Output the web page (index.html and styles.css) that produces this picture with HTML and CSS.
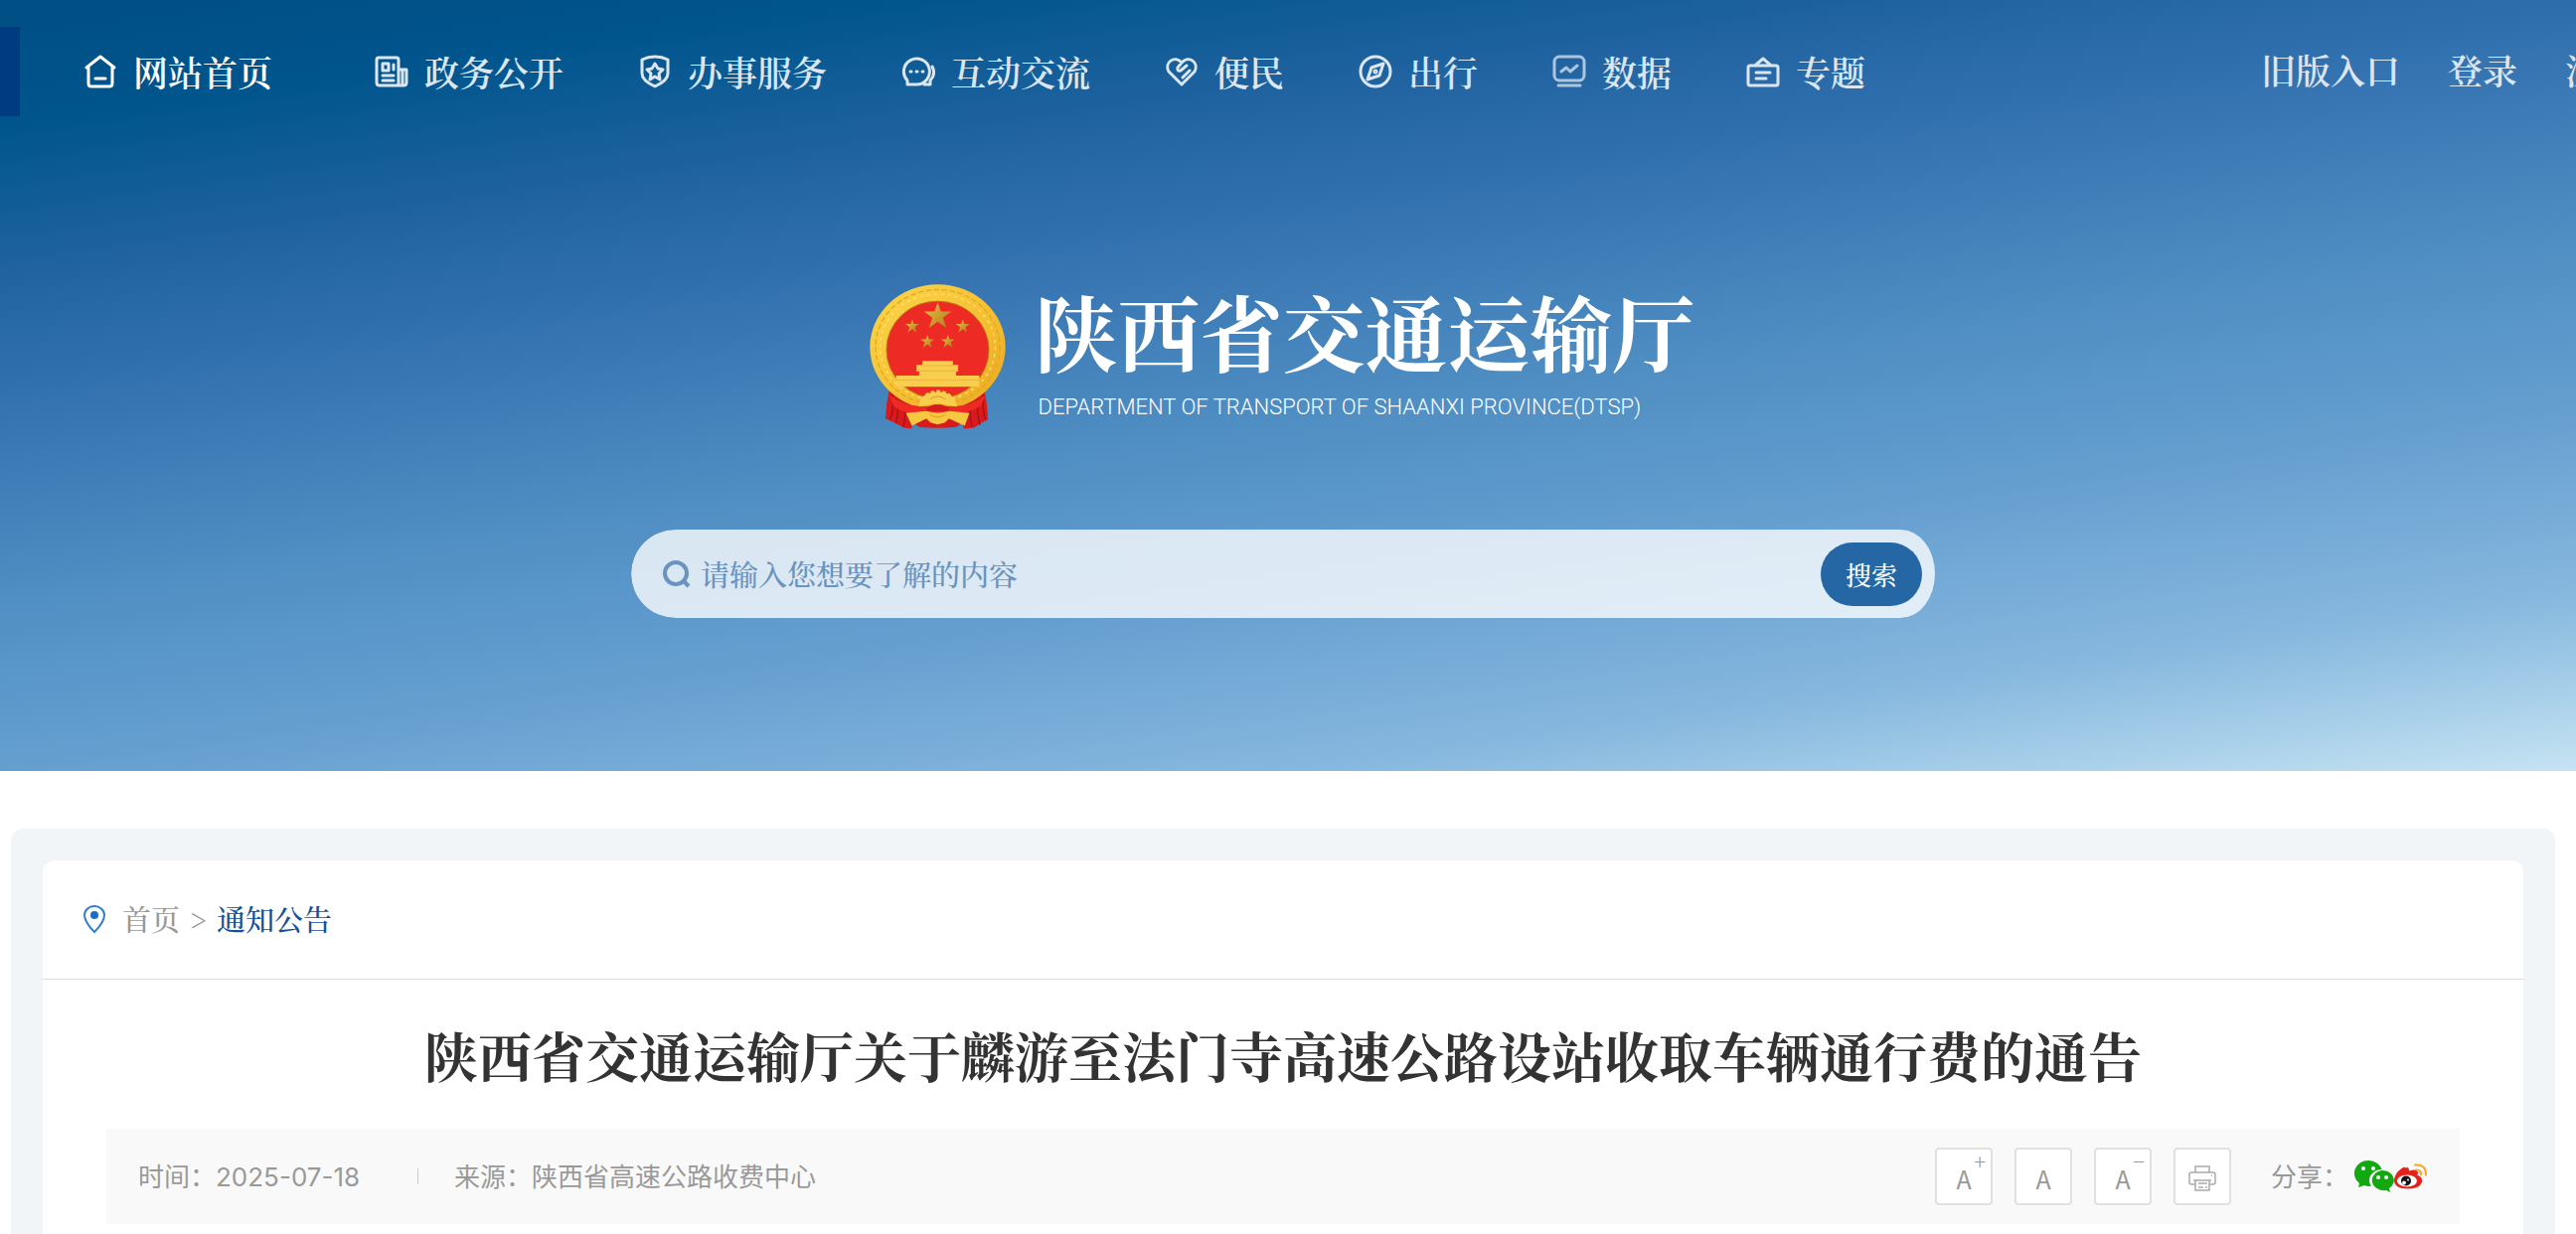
FILE: index.html
```
<!DOCTYPE html>
<html lang="zh-CN">
<head>
    <meta charset="UTF-8">
    <meta name="viewport" content="width=device-width, initial-scale=1.0">
    <title>陕西省交通运输厅</title>
    <link rel="stylesheet" href="styles.css">
</head>
<body>

<header class="header">
    <div class="topbar">
        <nav class="nav">
            <a href="#" class="nav-item active">
                <svg class="icon" viewBox="0 0 34 34"><path d="M3 13 17 2l14 11M5 13v16q0 3 3 3h18q3 0 3-3V13M12 24h10"/></svg>
                网站首页
            </a>
            <a href="#" class="nav-item">
                <svg class="icon" viewBox="0 0 34 34"><path d="M24 31V5q0-2-2-2H4q-2 0-2 2v23q0 3 3 3h24q3 0 3-3V15h-8M8 9h6v7H8zM19 10v5M8 21h11M8 26h11M28 16v14"/></svg>
                政务公开
            </a>
            <a href="#" class="nav-item">
                <svg class="icon" viewBox="0 0 34 34"><path d="M17 2q7 0 13 3v14q0 7-13 13Q4 26 4 19V5q6-3 13-3zM17 9l3 5 5 1-4 4 1 6-5-3-5 3 1-6-4-4 5-1z"/></svg>
                办事服务
            </a>
            <a href="#" class="nav-item">
                <svg class="icon" viewBox="0 0 34 34"><path d="M6 30v-4A13 13 0 1 1 15 30zM31 12q4 8-2 14v4h-6M9 17h1M15 17h1M21 17h1"/></svg>
                互动交流
            </a>
            <a href="#" class="nav-item">
                <svg class="icon" viewBox="0 0 34 34"><path d="M17 30 4 17C-1 8 10 0 17 8c7-8 18 0 13 9zM17 8l-4 5q-1 4 3 3l6-5M18 23l7-7"/></svg>
                便民
            </a>
            <a href="#" class="nav-item">
                <svg class="icon" viewBox="0 0 34 34"><circle cx="17" cy="17" r="15"/><path d="M25 9l-4 12-12 4 4-12z"/><circle cx="17" cy="17" r="1"/></svg>
                出行
            </a>
            <a href="#" class="nav-item data">
                <svg class="icon" viewBox="0 0 34 34"><rect x="2" y="2" width="30" height="24" rx="5"/><path d="M9 17l5-4 4 4 7-6M6 31h22"/></svg>
                数据
            </a>
            <a href="#" class="nav-item">
                <svg class="icon" viewBox="0 0 34 34"><rect x="2" y="11" width="30" height="20" rx="2"/><path d="M10 10l7-6 7 6M10 18h14M10 24h10"/></svg>
                专题
            </a>
        </nav>
        <div class="user-links">
            <a href="#">旧版入口</a>
            <a href="#">登录</a>
            <a href="#">注册</a>
        </div>
    </div>

    <div class="brand">
        <svg class="emblem" viewBox="24 18 412 438">
            <defs>
                <linearGradient id="gold" x1="0" y1="0" x2="1" y2="1">
                    <stop offset="0" stop-color="#fbd64a"/>
                    <stop offset="0.5" stop-color="#f6c234"/>
                    <stop offset="1" stop-color="#e9a820"/>
                </linearGradient>
                <linearGradient id="star" x1="0" y1="0" x2="1" y2="1">
                    <stop offset="0" stop-color="#f0c044"/>
                    <stop offset="1" stop-color="#b07a1c"/>
                </linearGradient>
                <path id="s" d="M0-40 10-12 42-12 16 7 26 38 0 19-26 38-16 7-42-12-10-12z"/>
            </defs>
            <!-- drapes -->
            <path d="M86 326q-12 50-14 98l26 12 30 16 22 3 14-35h132l14 35 32-4 20-14 20-10q-2-56-14-101z" fill="#d91a1c"/>
            <path d="M92 350q8 44-6 78M108 366q4 36-4 72M368 350q-4 44 6 78M352 366q-4 44 6 78M130 390q4 26-4 60M330 390q-4 26 4 60" stroke="#a80f14" stroke-width="4" fill="none"/>
            <!-- wreath -->
            <ellipse cx="230" cy="208" rx="205" ry="190" fill="url(#gold)"/>
            <ellipse cx="230" cy="208" rx="188" ry="174" fill="none" stroke="#e3a722" stroke-width="4" stroke-dasharray="16 8"/>
            <ellipse cx="230" cy="208" rx="174" ry="161" fill="none" stroke="#ffe27a" stroke-width="4" stroke-dasharray="9 12"/>
            <ellipse cx="230" cy="216" rx="155" ry="147" fill="#ee2a24" stroke="#b9771b" stroke-width="3"/>
            <g fill="url(#star)">
                <use href="#s" transform="translate(230 112)"/>
                <use href="#s" transform="translate(153 144) scale(.5)"/>
                <use href="#s" transform="translate(306 144) scale(.5)"/>
                <use href="#s" transform="translate(199 190) scale(.5)"/>
                <use href="#s" transform="translate(261 190) scale(.5)"/>
            </g>
            <!-- gate -->
            <path d="M184 250h92v12h16v20h-6v12h70v34H104v-34h70v-12h-8v-20h18z" fill="#f9cd4d"/>
            <path d="M168 280h122M182 264h98M104 308h252" stroke="#e3ab36" stroke-width="2" fill="none"/>
            <!-- gear and ribbon -->
            <path d="M84 352q60 50 146 30 86 20 146-30l-16 34q-40 26-86 24l-44 14-44-14q-60 2-90-24z" fill="#ee2a24"/>
            <path d="M172 388q4-42 58-44 54 2 58 44l-30-6q-28-6-56 0z" fill="#f9cd4d"/>
            <path d="M186 370q8-24 44-26 36 2 44 26" fill="none" stroke="#f9cd4d" stroke-width="12" stroke-dasharray="11 6"/>
            <path d="M196 390l24-8h20l24 8v12h-68z" fill="#d91a1c"/>
            <path d="M160 440l40-20h60l40 20-14 10q-56 6-112 0z" fill="#d91a1c"/>
            <path d="M134 408l62-6q34 10 68 0l62 6-14 38-48-22-12 12-22 6-22-6-12-12-44 22z" fill="#f6c83f"/>
            <path d="M206 366q24-18 48 0M206 412q24 16 48 0" stroke="#d99a22" stroke-width="3" fill="none"/>
        </svg>
        <div class="brand-text">
            <p class="brand-name">陕西省交通运输厅</p>
            <p class="brand-en">DEPARTMENT OF TRANSPORT OF SHAANXI PROVINCE(DTSP)</p>
        </div>
    </div>

    <form class="search">
        <svg class="search-icon" viewBox="0 0 28 28"><circle cx="13" cy="13" r="11"/><path d="M21 21l5 5"/></svg>
        <input type="text" aria-label="搜索" placeholder="请输入您想要了解的内容">
        <button type="button">搜索</button>
    </form>
</header>

<main class="container">
    <div class="card">
        <div class="crumb">
            <svg class="pin" viewBox="0 0 24 30">
                <path d="M12 28Q2 18 2 11a10 9 0 0 1 20 0q0 7-10 17z" fill="none" stroke="#2f7fcb" stroke-width="2"/>
                <circle cx="12" cy="11" r="4" fill="#1a6fc4"/>
            </svg>
            <a href="#">首页</a>
            <span>&gt;</span>
            <a href="#" class="current">通知公告</a>
        </div>
        <h1 class="title">陕西省交通运输厅关于麟游至法门寺高速公路设站收取车辆通行费的通告</h1>
        <div class="meta">
            <span>时间：2025-07-18</span>
            <i class="line"></i>
            <span>来源：陕西省高速公路收费中心</span>
            <div class="tools">
                <button type="button" class="tool">A<sup>+</sup></button>
                <button type="button" class="tool">A</button>
                <button type="button" class="tool">A<sup>−</sup></button>
                <button type="button" class="tool" aria-label="打印">
                    <svg class="printer" viewBox="0 0 28 28"><path d="M7 8V2h14v6M7 20H3q-2 0-2-2v-8q0-2 2-2h22q2 0 2 2v8q0 2-2 2h-4M5 16h18M7 16v10h14V16M10 19h9M10 23h5M17 23h2M23 11h1"/></svg>
                </button>
            </div>
            <span class="share-label">分享：</span>
            <a href="#" aria-label="微信">
                <svg class="wechat" viewBox="0 0 40 32">
                    <path d="M14 0a14 13 0 0 0-9 23l-1 4 6-2q5 2 9 0l9-14A14 13 0 0 0 14 0z" fill="#14a810"/>
                    <ellipse cx="28" cy="20" rx="13" ry="11" fill="#f9f9f9"/>
                    <path d="M28 10a12 10 0 1 0 4 20l4 2-1-4A12 10 0 0 0 28 10z" fill="#14a810"/>
                    <g fill="#fff"><circle cx="9" cy="8" r="2"/><circle cx="19" cy="8" r="2"/><circle cx="24" cy="17" r="2"/><circle cx="32" cy="17" r="2"/></g>
                </svg>
            </a>
            <a href="#" aria-label="微博">
                <svg class="weibo" viewBox="0 0 34 27">
                    <path d="M12 5q3-2 3 3 6-2 8 0 2 2 0 4 6 2 5 7-2 7-14 7Q0 26 0 17 1 10 7 6q3-3 5-1z" fill="#e6211b"/>
                    <ellipse cx="13" cy="18" rx="10" ry="6" fill="#fff"/>
                    <circle cx="12" cy="18" r="5" fill="#111"/>
                    <circle cx="10" cy="20" r="2" fill="#fff"/>
                    <circle cx="14" cy="17" r="1" fill="#fff"/>
                    <path d="M21 2q11-1 11 10M22 7q6 0 5 5" fill="none" stroke="#f6a623" stroke-width="2" stroke-linecap="round"/>
                </svg>
            </a>
        </div>
    </div>
</main>

</body>
</html>
```
FILE: styles.css
```
* {
    box-sizing: border-box;
}

body {
    margin: 0;
    min-height: 100vh;
    display: flex;
    flex-direction: column;
    font-family: "Noto Serif CJK SC", "Noto Sans CJK SC", serif;
    font-weight: 500;
    background-color: #fff;
}

a {
    color: inherit;
    text-decoration: none;
}

p, h1 {
    margin: 0;
}

/* header */
.header {
    padding: 27px 0 154px;
    overflow: hidden;
    background: linear-gradient(172deg, #004f84 0%, #00558d 11%, #2264a2 25%, #3674b2 37%, #4e8dc2 52%, #659fd0 68%, #86b7de 84%, #a4cde8 92%, #c6e3f3 100%);
}

.topbar {
    display: flex;
    align-items: center;
    height: 90px;
    border-left: 20px solid #003a80;
    font-size: 35px;
    line-height: 48px;
    font-weight: 600;
    color: #dbe6f1;
    white-space: nowrap;
}

.nav {
    display: flex;
    gap: 75px;
    padding-left: 64px;
}

.nav-item {
    display: flex;
    align-items: center;
    gap: 16px;
}

.nav-item.active {
    margin-right: 28px;
    color: #fff;
}

.icon {
    width: 34px;
    height: 34px;
    fill: none;
    stroke: currentColor;
    stroke-width: 3;
    stroke-linejoin: round;
    stroke-linecap: round;
}

.data .icon {
    opacity: 0.75;
}

.user-links {
    display: flex;
    gap: 48px;
    margin-left: auto;
    margin-right: -59px;
    padding-bottom: 4px;
}

.brand {
    display: flex;
    justify-content: center;
    gap: 30px;
    margin-top: 169px;
    padding-right: 12px;
    color: #fff;
}

.emblem {
    width: 137px;
    height: 146px;
}

.brand-name {
    font-size: 83px;
    line-height: 92px;
    font-weight: bold;
}

.brand-en {
    margin-top: 20px;
    padding-left: 3px;
    font-family: Roboto, "Liberation Sans", sans-serif;
    font-size: 22px;
    line-height: 24px;
    font-weight: 300;
}

.search {
    display: flex;
    align-items: center;
    width: calc(100% - 20px);
    max-width: 1322px;
    height: 89px;
    margin: 101px auto 0;
    border-right: 10px solid transparent;
    padding: 0 13px 0 32px;
    border-radius: 45px;
    background: rgba(255, 255, 255, 0.78);
    background-clip: padding-box;
}

.search-icon {
    width: 28px;
    height: 28px;
    fill: none;
    stroke: #6a93bf;
    stroke-width: 4;
}

.search input {
    flex: 1;
    min-width: 0;
    padding: 0 10px;
    border: none;
    outline: none;
    background: none;
    font-family: inherit;
    font-size: 29px;
    font-weight: 500;
}

.search input::placeholder {
    color: #6a93bf;
}

.search button {
    width: 102px;
    height: 64px;
    padding: 0;
    border: none;
    border-radius: 32px;
    background-color: #2467a4;
    color: #fff;
    font-family: inherit;
    font-size: 26px;
    font-weight: 500;
    cursor: pointer;
}

/* article */
.container {
    flex: 1;
    display: flex;
    margin: 58px 21px 0 11px;
    padding: 32px 32px 0;
    border-radius: 12px 12px 0 0;
    background-color: #f1f5f8;
}

.card {
    flex: 1;
    border-radius: 12px 12px 0 0;
    background-color: #fff;
}

.crumb {
    display: flex;
    align-items: center;
    height: 120px;
    padding: 0 40px 2px;
    border-bottom: 1px solid #ddd;
    font-size: 29px;
    color: #999;
}

.crumb span {
    margin: 0 10px;
}

.crumb .current {
    color: #15519b;
}

.pin {
    width: 24px;
    height: 30px;
    margin-right: 16px;
}

.title {
    padding: 36px 0 34px;
    font-size: 54px;
    line-height: 80px;
    font-weight: bold;
    text-align: center;
    color: #333;
}

.meta {
    display: flex;
    align-items: center;
    height: 96px;
    margin: 0 64px;
    padding: 0 32px;
    background-color: #f9f9f9;
    font-family: Inter, "Noto Sans CJK SC", sans-serif;
    font-size: 26px;
    font-weight: 400;
    color: #999;
}

.meta span {
    padding-bottom: 4px;
}

.line {
    width: 1px;
    height: 16px;
    margin: 0 36px 0 58px;
    background-color: #ccc;
}

.tools {
    display: flex;
    gap: 22px;
    margin-left: auto;
}

.tool {
    position: relative;
    width: 58px;
    height: 58px;
    padding: 4px 0 0;
    border: 2px solid #e0e0e0;
    border-radius: 4px;
    background-color: #fff;
    font-family: "Noto Sans CJK SC", sans-serif;
    font-size: 25px;
    color: #999;
    cursor: pointer;
}

.tool sup {
    position: absolute;
    top: 0;
    right: 5px;
    font-size: 22px;
    line-height: 22px;
    font-weight: 300;
}

.printer {
    display: block;
    width: 28px;
    height: 28px;
    margin: 0 auto;
    fill: none;
    stroke: #aaa;
    stroke-width: 1.5;
}

.share-label {
    margin-left: 40px;
    margin-right: 6px;
}

.wechat,
.weibo {
    display: block;
    height: 32px;
}

.wechat {
    width: 40px;
}

.weibo {
    width: 34px;
}
```
